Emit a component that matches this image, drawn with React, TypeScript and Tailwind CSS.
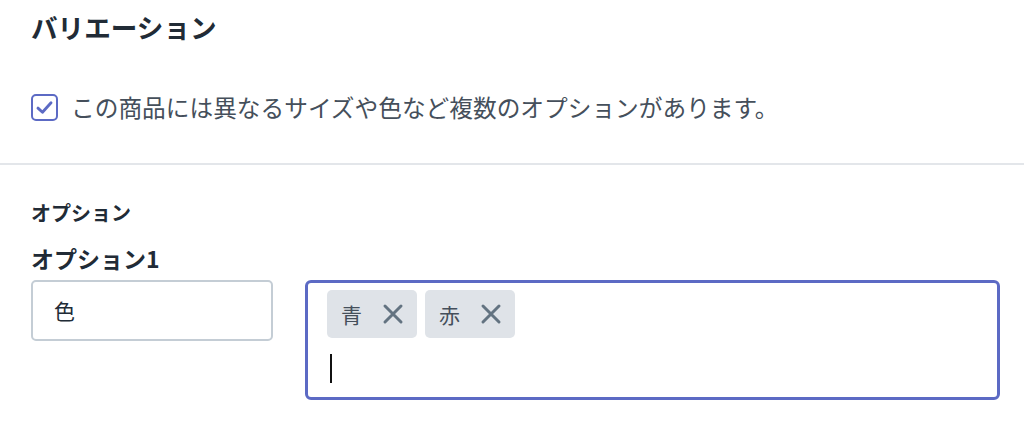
const font = { fontFamily: '"Noto Sans CJK JP", "Noto Sans", sans-serif' };

function Tag({ label }: { label: string }) {
  return (
    <span className="flex h-[48px] items-center gap-[20px] rounded-[5px] bg-[#dfe3e8] pl-[14px] pr-[13px]">
      <span className="text-[21px] leading-none text-[#454f5b]">{label}</span>
      <svg width="22" height="22" viewBox="0 0 22 22" fill="none" aria-hidden>
        <path d="M3 3L19 19M19 3L3 19" stroke="#637381" strokeWidth="3" strokeLinecap="round" />
      </svg>
    </span>
  );
}

export default function App() {
  return (
    <div className="h-[422px] w-[1024px] overflow-hidden bg-white text-[#212b36]" style={font}>
      <div className="px-[31px] pt-[9px]">
        <h2 className="text-[26.6px] font-bold leading-[36px]">バリエーション</h2>
        <label className="mt-[47px] flex items-center gap-[13px]">
          <span className="flex h-[27px] w-[27px] shrink-0 items-center justify-center rounded-[5px] border-2 border-[#5c6ac4]">
            <svg width="19" height="19" viewBox="0 0 16 16" fill="none" aria-hidden>
              <path d="M2.5 8.5L6.3 12L13.5 4" stroke="#5c6ac4" strokeWidth="2.4" strokeLinecap="round" strokeLinejoin="round" />
            </svg>
          </span>
          <span className="text-[23.7px] leading-[30px] text-[#454f5b]">
            この商品には異なるサイズや色など複数のオプションがあります。
          </span>
        </label>
      </div>
      <div className="mt-[41px] h-[2px] w-full bg-[#e3e6ea]" />
      <div className="pl-[31px] pr-[24px] pt-[36px]">
        <div className="text-[20px] font-bold leading-[24px]">オプション</div>
        <div className="mt-[18px] text-[23px] font-bold leading-[30px]">オプション1</div>
        <div className="mt-[7px] flex items-start gap-[32px]">
          <div className="flex h-[61px] w-[242px] items-center rounded-[5px] border-2 border-[#c4cdd5] pl-[21px] text-[21px] text-[#212b36]">
            色
          </div>
          <div className="flex h-[120px] flex-1 flex-col rounded-[6px] border-[3px] border-[#5c6ac4] pl-[19px] pr-[16px] pt-[7px]">
            <div className="flex gap-[8px]">
              <Tag label="青" />
              <Tag label="赤" />
            </div>
            <div className="mt-[16px] ml-[3px] h-[29px] w-[2px] bg-[#111]" />
          </div>
        </div>
      </div>
    </div>
  );
}
